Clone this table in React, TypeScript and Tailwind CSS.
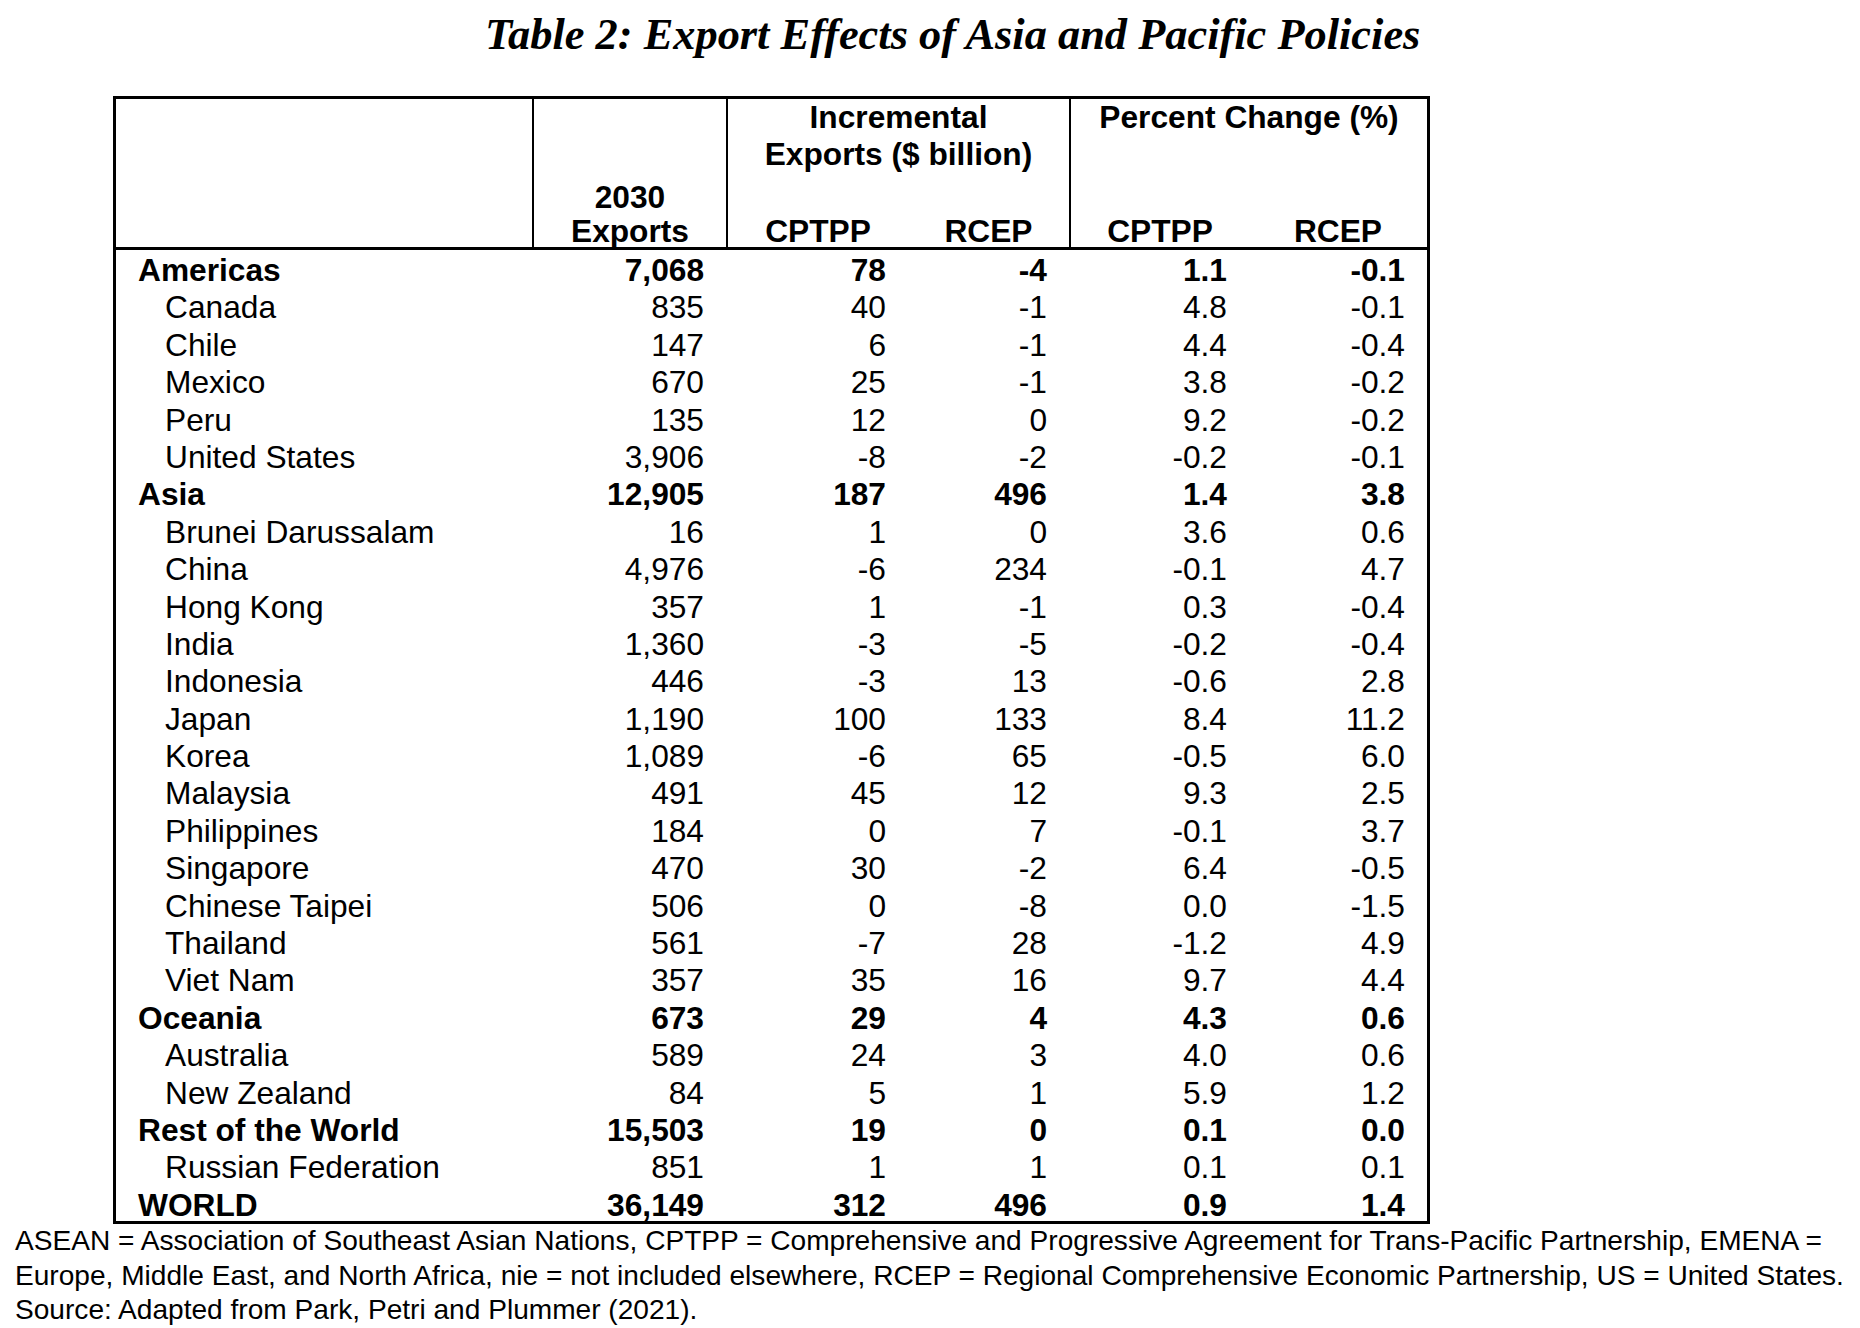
type Row = {
  name: string;
  exports: string;
  cptpp: string;
  rcep: string;
  pCptpp: string;
  pRcep: string;
  bold?: boolean;
};

const rows: Row[] = [
  { name: "Americas", exports: "7,068", cptpp: "78", rcep: "-4", pCptpp: "1.1", pRcep: "-0.1", bold: true },
  { name: "Canada", exports: "835", cptpp: "40", rcep: "-1", pCptpp: "4.8", pRcep: "-0.1" },
  { name: "Chile", exports: "147", cptpp: "6", rcep: "-1", pCptpp: "4.4", pRcep: "-0.4" },
  { name: "Mexico", exports: "670", cptpp: "25", rcep: "-1", pCptpp: "3.8", pRcep: "-0.2" },
  { name: "Peru", exports: "135", cptpp: "12", rcep: "0", pCptpp: "9.2", pRcep: "-0.2" },
  { name: "United States", exports: "3,906", cptpp: "-8", rcep: "-2", pCptpp: "-0.2", pRcep: "-0.1" },
  { name: "Asia", exports: "12,905", cptpp: "187", rcep: "496", pCptpp: "1.4", pRcep: "3.8", bold: true },
  { name: "Brunei Darussalam", exports: "16", cptpp: "1", rcep: "0", pCptpp: "3.6", pRcep: "0.6" },
  { name: "China", exports: "4,976", cptpp: "-6", rcep: "234", pCptpp: "-0.1", pRcep: "4.7" },
  { name: "Hong Kong", exports: "357", cptpp: "1", rcep: "-1", pCptpp: "0.3", pRcep: "-0.4" },
  { name: "India", exports: "1,360", cptpp: "-3", rcep: "-5", pCptpp: "-0.2", pRcep: "-0.4" },
  { name: "Indonesia", exports: "446", cptpp: "-3", rcep: "13", pCptpp: "-0.6", pRcep: "2.8" },
  { name: "Japan", exports: "1,190", cptpp: "100", rcep: "133", pCptpp: "8.4", pRcep: "11.2" },
  { name: "Korea", exports: "1,089", cptpp: "-6", rcep: "65", pCptpp: "-0.5", pRcep: "6.0" },
  { name: "Malaysia", exports: "491", cptpp: "45", rcep: "12", pCptpp: "9.3", pRcep: "2.5" },
  { name: "Philippines", exports: "184", cptpp: "0", rcep: "7", pCptpp: "-0.1", pRcep: "3.7" },
  { name: "Singapore", exports: "470", cptpp: "30", rcep: "-2", pCptpp: "6.4", pRcep: "-0.5" },
  { name: "Chinese Taipei", exports: "506", cptpp: "0", rcep: "-8", pCptpp: "0.0", pRcep: "-1.5" },
  { name: "Thailand", exports: "561", cptpp: "-7", rcep: "28", pCptpp: "-1.2", pRcep: "4.9" },
  { name: "Viet Nam", exports: "357", cptpp: "35", rcep: "16", pCptpp: "9.7", pRcep: "4.4" },
  { name: "Oceania", exports: "673", cptpp: "29", rcep: "4", pCptpp: "4.3", pRcep: "0.6", bold: true },
  { name: "Australia", exports: "589", cptpp: "24", rcep: "3", pCptpp: "4.0", pRcep: "0.6" },
  { name: "New Zealand", exports: "84", cptpp: "5", rcep: "1", pCptpp: "5.9", pRcep: "1.2" },
  { name: "Rest of the World", exports: "15,503", cptpp: "19", rcep: "0", pCptpp: "0.1", pRcep: "0.0", bold: true },
  { name: "Russian Federation", exports: "851", cptpp: "1", rcep: "1", pCptpp: "0.1", pRcep: "0.1" },
  { name: "WORLD", exports: "36,149", cptpp: "312", rcep: "496", pCptpp: "0.9", pRcep: "1.4", bold: true },
];

function TableRow({ row }: { row: Row }) {
  return (
    <div
      className={`grid grid-cols-[416px_194px_182px_161px_180px_178px] h-[37.4px] last:h-[34.5px] leading-[37.4px] ${
        row.bold ? "font-bold" : "font-normal"
      }`}
    >
      <div className={row.bold ? "pl-[22px]" : "pl-[49px]"}>{row.name}</div>
      <div className="text-right pr-[22px]">{row.exports}</div>
      <div className="text-right pr-[22px]">{row.cptpp}</div>
      <div className="text-right pr-[22px]">{row.rcep}</div>
      <div className="text-right pr-[22px]">{row.pCptpp}</div>
      <div className="text-right pr-[22px]">{row.pRcep}</div>
    </div>
  );
}

export default function App() {
  return (
    <main className="min-h-screen bg-white text-black font-['Liberation_Sans',Arial,sans-serif]">
      <h1 className="pl-[485px] pt-[9px] h-[59px] leading-[50px] text-[44.4px] font-bold italic whitespace-nowrap font-['Liberation_Serif','Times_New_Roman',serif]">
        Table 2: Export Effects of Asia and Pacific Policies
      </h1>

      <div className="ml-[113px] mt-[37px] w-[1317px] border-[3px] border-black text-[31.7px]">
        {/* header */}
        <div className="flex h-[151px] border-b-[3px] border-black font-bold leading-[37px]">
          <div className="w-[416px]" />
          <div className="w-[194px] border-l-2 border-black flex flex-col justify-end items-center">
            <span className="leading-[35px]">2030</span>
            <span className="leading-[32px]">Exports</span>
          </div>
          <div className="w-[343px] border-l-2 border-black flex flex-col justify-between">
            <div className="text-center">
              <div>Incremental</div>
              <div>Exports ($ billion)</div>
            </div>
            <div className="flex leading-[32px]">
              <div className="w-[180px] text-center">CPTPP</div>
              <div className="w-[161px] text-center">RCEP</div>
            </div>
          </div>
          <div className="w-[358px] border-l-2 border-black flex flex-col justify-between">
            <div className="text-center">Percent Change (%)</div>
            <div className="flex leading-[32px]">
              <div className="w-[178px] text-center">CPTPP</div>
              <div className="w-[178px] text-center">RCEP</div>
            </div>
          </div>
        </div>

        {/* body */}
        <div className="pt-[2px]">
          {rows.map((r) => (
            <TableRow key={r.name} row={r} />
          ))}
        </div>
      </div>

      <div className="pl-[15px] text-[28.1px] leading-[34.5px] whitespace-nowrap">
        <div>
          ASEAN = Association of Southeast Asian Nations, CPTPP = Comprehensive and Progressive Agreement for
          Trans-Pacific Partnership, EMENA =
        </div>
        <div>
          Europe, Middle East, and North Africa, nie = not included elsewhere, RCEP = Regional Comprehensive Economic
          Partnership, US = United States.
        </div>
        <div>Source: Adapted from Park, Petri and Plummer (2021).</div>
      </div>
    </main>
  );
}
